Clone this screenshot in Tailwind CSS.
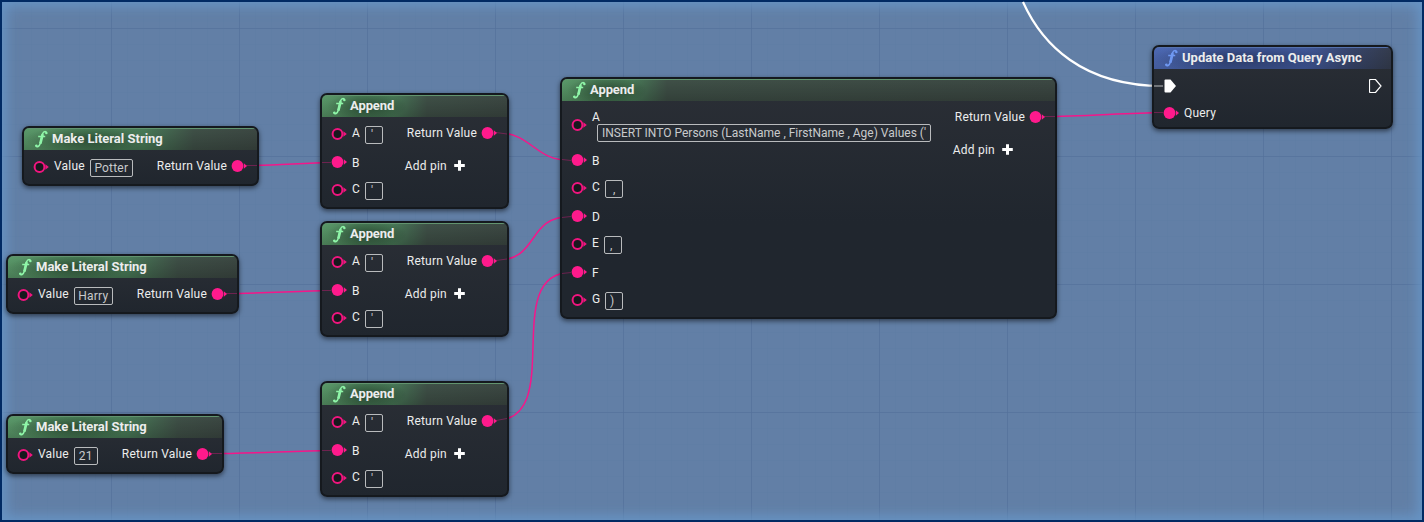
<!DOCTYPE html>
<html lang="en">
<head>
<meta charset="utf-8">
<title>Blueprint graph</title>
<script src="https://cdn.jsdelivr.net/npm/@tailwindcss/browser@4"></script>
</head>
<body>
<svg class="absolute h-0 w-0">
  <defs>
    <symbol id="fn" viewBox="0 0 13 19"><path d="M11.600 3.200C11.600.9 8.800.5 7.700 3.600C6.800 6.400 6.200 10 5.200 13.500C4.400 16.500 1.900 17.700.9 15.900" fill="none" stroke="currentColor" stroke-width="1.500" stroke-linecap="round"/><path d="M7.700 4.200C6.800 7.400 6.200 10.200 5.300 13.600" fill="none" stroke="currentColor" stroke-width="2.700"/><path d="M3.200 6.500h7" stroke="currentColor" stroke-width="1.400"/><circle cx="11.300" cy="3" r="1.200" fill="currentColor"/><circle cx="1.400" cy="15.600" r="1.200" fill="currentColor"/></symbol>
    <symbol id="pin" viewBox="0 0 16 14"><circle cx="6.5" cy="7" r="4.9" fill="#17191d" stroke="#f0157f" stroke-width="2"/><path d="M12.4 4.2 15.8 7l-3.4 2.8z" fill="#f0157f"/></symbol>
    <symbol id="pinOn" viewBox="0 0 16 14"><circle cx="6.5" cy="7" r="5.9" fill="#ff1a8c"/><path d="M12.8 4.2 16 7l-3.2 2.8z" fill="#ff1a8c"/></symbol>
    <symbol id="plus" viewBox="0 0 11 11"><path d="M5.5.2v10.6M.2 5.500h10.600" stroke="#fff" stroke-width="3" fill="none"/></symbol>
  </defs>
</svg>
<main id="canvas" class="relative h-[522px] w-[1424px] overflow-hidden bg-[#627fa6] font-[Roboto,sans-serif] text-[12px] leading-[14px] tracking-[0.2px] text-[#eceded]">
  <!-- grid -->
  <svg class="absolute inset-0" width="1424" height="522">
    <defs>
      <pattern id="minor" x="111" y="28" width="16" height="16" patternUnits="userSpaceOnUse"><path d="M.5 0v16M0 .5h16" stroke="#5c7aa2" stroke-opacity=".35"/></pattern>
      <pattern id="major" x="111" y="28" width="128" height="128" patternUnits="userSpaceOnUse"><path d="M.5 0v128M0 .5h128" stroke="#54709a" stroke-opacity=".6"/></pattern>
    </defs>
    <rect width="1424" height="522" fill="url(#minor)"/>
    <rect width="1424" height="522" fill="url(#major)"/>
  </svg>
  <div class="absolute inset-0 border-2 border-[#012a63] shadow-[inset_0_0_13px_4px_#6795c6]"></div>

  <!-- wires -->
  <svg class="absolute inset-0" width="1424" height="522" fill="none" stroke="#f5168a" stroke-width="1.5">
    <path d="M246 165.500C275 165.500 302 163 331 162.500"/>
    <path d="M226 293.500C261 293.500 296 291 331 290.500"/>
    <path d="M211 453.500C251 453.500 291 451 331 450.500"/>
    <path d="M495 132.500C533 132.500 533 160.500 571 160.500"/>
    <path d="M495 260.500C541 260.500 525 216.500 571 216.500"/>
    <path d="M495 420.500C567 420.500 499 272.500 571 272.500"/>
    <path d="M1043 116.500C1083 116.500 1123 113 1163 112.500"/>
    <path d="M1023 2C1042 44 1082 86 1163 86" stroke="#fff" stroke-width="2.200"/>
  </svg>

  <!-- Make Literal String: Potter -->
  <section class="absolute left-[22px] top-[126px] flex h-[60px] w-[237px] flex-col overflow-hidden rounded-[7px] border-2 border-[#15191e] bg-linear-to-b from-[#2b2f36] to-[#20262e] shadow-[0_2px_5px_#0008]">
    <header class="flex h-[22px] shrink-0 items-center gap-[4px] border-t border-[#62946f] bg-[radial-gradient(ellipse_60px_14px_at_60px_50%,#0005,#0000),linear-gradient(to_bottom,#0000,#0003),linear-gradient(to_right,#5b9a6a,#4a8058_75px,#487a57_120px,#3f5047_170px,#3c4843)] pl-[11px]">
      <svg class="h-[19px] w-[13px] text-[#8ff5a8]"><use href="#fn"/></svg>
      <b class="mb-0.5 text-[13px] font-bold tracking-[0px]">Make Literal String</b>
    </header>
    <div class="flex flex-1 justify-between pl-[9px] pr-[10px]">
      <div class="flex h-[33px] items-center"><svg class="mt-px h-[14px] w-4"><use href="#pin"/></svg><span class="ml-[5px] mb-px">Value</span><span class="ml-[5px] mt-[2px] flex h-[18px] w-[43px] items-center justify-center rounded-[2px] border border-[#b9bbbd] text-[#c8cacc]">Potter</span></div>
      <div class="flex h-[31px] items-center gap-1"><span>Return Value</span><svg class="h-[14px] w-4"><use href="#pinOn"/></svg></div>
    </div>
  </section>

  <!-- Make Literal String: Harry -->
  <section class="absolute left-[6px] top-[254px] flex h-[60px] w-[233px] flex-col overflow-hidden rounded-[7px] border-2 border-[#15191e] bg-linear-to-b from-[#2b2f36] to-[#20262e] shadow-[0_2px_5px_#0008]">
    <header class="flex h-[22px] shrink-0 items-center gap-[4px] border-t border-[#62946f] bg-[radial-gradient(ellipse_60px_14px_at_60px_50%,#0005,#0000),linear-gradient(to_bottom,#0000,#0003),linear-gradient(to_right,#5b9a6a,#4a8058_75px,#487a57_120px,#3f5047_170px,#3c4843)] pl-[11px]">
      <svg class="h-[19px] w-[13px] text-[#8ff5a8]"><use href="#fn"/></svg>
      <b class="mb-0.5 text-[13px] font-bold tracking-[0px]">Make Literal String</b>
    </header>
    <div class="flex flex-1 justify-between pl-[9px] pr-[10px]">
      <div class="flex h-[33px] items-center"><svg class="mt-px h-[14px] w-4"><use href="#pin"/></svg><span class="ml-[5px] mb-px">Value</span><span class="ml-[5px] mt-[2px] flex h-[18px] w-[39px] items-center justify-center rounded-[2px] border border-[#b9bbbd] text-[#c8cacc]">Harry</span></div>
      <div class="flex h-[31px] items-center gap-1"><span>Return Value</span><svg class="h-[14px] w-4"><use href="#pinOn"/></svg></div>
    </div>
  </section>

  <!-- Make Literal String: 21 -->
  <section class="absolute left-[6px] top-[414px] flex h-[60px] w-[218px] flex-col overflow-hidden rounded-[7px] border-2 border-[#15191e] bg-linear-to-b from-[#2b2f36] to-[#20262e] shadow-[0_2px_5px_#0008]">
    <header class="flex h-[22px] shrink-0 items-center gap-[4px] border-t border-[#62946f] bg-[radial-gradient(ellipse_60px_14px_at_60px_50%,#0005,#0000),linear-gradient(to_bottom,#0000,#0003),linear-gradient(to_right,#5b9a6a,#4a8058_75px,#487a57_120px,#3f5047_170px,#3c4843)] pl-[11px]">
      <svg class="h-[19px] w-[13px] text-[#8ff5a8]"><use href="#fn"/></svg>
      <b class="mb-0.5 text-[13px] font-bold tracking-[0px]">Make Literal String</b>
    </header>
    <div class="flex flex-1 justify-between pl-[9px] pr-[10px]">
      <div class="flex h-[33px] items-center"><svg class="mt-px h-[14px] w-4"><use href="#pin"/></svg><span class="ml-[5px] mb-px">Value</span><span class="ml-[5px] mt-[2px] flex h-[18px] w-[24px] items-center justify-center rounded-[2px] border border-[#b9bbbd] text-[#c8cacc]">21</span></div>
      <div class="flex h-[31px] items-center gap-1"><span>Return Value</span><svg class="h-[14px] w-4"><use href="#pinOn"/></svg></div>
    </div>
  </section>

  <!-- Append 1 -->
  <section class="absolute left-[320px] top-[93px] flex h-[116px] w-[189px] flex-col overflow-hidden rounded-[7px] border-2 border-[#15191e] bg-linear-to-b from-[#2b2f36] to-[#20262e] shadow-[0_2px_5px_#0008]">
    <header class="flex h-[22px] shrink-0 items-center gap-[4px] border-t border-[#62946f] bg-[radial-gradient(ellipse_40px_14px_at_45px_50%,#0005,#0000),linear-gradient(to_bottom,#0000,#0003),linear-gradient(to_right,#5b9a6a,#4a8058_35px,#487a57_70px,#3f5047_105px,#3c4843)] pl-[11px]">
      <svg class="h-[19px] w-[13px] text-[#8ff5a8]"><use href="#fn"/></svg>
      <b class="mb-0.5 text-[13px] font-bold tracking-[-0.1px]">Append</b>
    </header>
    <div class="flex flex-1 justify-between pl-[9px] pr-[10px] pt-[3px]">
      <div>
        <div class="flex h-7 items-center"><svg class="h-[14px] w-4"><use href="#pin"/></svg><span class="ml-[5px] mb-[3px] w-[13px]">A</span><span class="mt-px h-[18px] w-[18px] rounded-[2px] border border-[#b9bbbd] pl-[5px] leading-[16px] text-[#c8cacc]">'</span></div>
        <div class="flex h-7 items-center"><svg class="h-[14px] w-4"><use href="#pinOn"/></svg><span class="ml-[5px] mt-px">B</span></div>
        <div class="flex h-7 items-center"><svg class="h-[14px] w-4"><use href="#pin"/></svg><span class="ml-[5px] mb-[3px] w-[13px]">C</span><span class="mt-px h-[18px] w-[18px] rounded-[2px] border border-[#b9bbbd] pl-[5px] leading-[16px] text-[#c8cacc]">'</span></div>
      </div>
      <div>
        <div class="flex h-[25px] items-center gap-1"><span>Return Value</span><svg class="h-[14px] w-4"><use href="#pinOn"/></svg></div>
        <div class="-ml-0.5 mt-2 flex h-[25px] items-center gap-[7px]"><span>Add pin</span><svg class="h-[11px] w-[11px]"><use href="#plus"/></svg></div>
      </div>
    </div>
  </section>

  <!-- Append 2 -->
  <section class="absolute left-[320px] top-[221px] flex h-[116px] w-[189px] flex-col overflow-hidden rounded-[7px] border-2 border-[#15191e] bg-linear-to-b from-[#2b2f36] to-[#20262e] shadow-[0_2px_5px_#0008]">
    <header class="flex h-[22px] shrink-0 items-center gap-[4px] border-t border-[#62946f] bg-[radial-gradient(ellipse_40px_14px_at_45px_50%,#0005,#0000),linear-gradient(to_bottom,#0000,#0003),linear-gradient(to_right,#5b9a6a,#4a8058_35px,#487a57_70px,#3f5047_105px,#3c4843)] pl-[11px]">
      <svg class="h-[19px] w-[13px] text-[#8ff5a8]"><use href="#fn"/></svg>
      <b class="mb-0.5 text-[13px] font-bold tracking-[-0.1px]">Append</b>
    </header>
    <div class="flex flex-1 justify-between pl-[9px] pr-[10px] pt-[3px]">
      <div>
        <div class="flex h-7 items-center"><svg class="h-[14px] w-4"><use href="#pin"/></svg><span class="ml-[5px] mb-[3px] w-[13px]">A</span><span class="mt-px h-[18px] w-[18px] rounded-[2px] border border-[#b9bbbd] pl-[5px] leading-[16px] text-[#c8cacc]">'</span></div>
        <div class="flex h-7 items-center"><svg class="h-[14px] w-4"><use href="#pinOn"/></svg><span class="ml-[5px] mt-px">B</span></div>
        <div class="flex h-7 items-center"><svg class="h-[14px] w-4"><use href="#pin"/></svg><span class="ml-[5px] mb-[3px] w-[13px]">C</span><span class="mt-px h-[18px] w-[18px] rounded-[2px] border border-[#b9bbbd] pl-[5px] leading-[16px] text-[#c8cacc]">'</span></div>
      </div>
      <div>
        <div class="flex h-[25px] items-center gap-1"><span>Return Value</span><svg class="h-[14px] w-4"><use href="#pinOn"/></svg></div>
        <div class="-ml-0.5 mt-2 flex h-[25px] items-center gap-[7px]"><span>Add pin</span><svg class="h-[11px] w-[11px]"><use href="#plus"/></svg></div>
      </div>
    </div>
  </section>

  <!-- Append 3 -->
  <section class="absolute left-[320px] top-[381px] flex h-[116px] w-[189px] flex-col overflow-hidden rounded-[7px] border-2 border-[#15191e] bg-linear-to-b from-[#2b2f36] to-[#20262e] shadow-[0_2px_5px_#0008]">
    <header class="flex h-[22px] shrink-0 items-center gap-[4px] border-t border-[#62946f] bg-[radial-gradient(ellipse_40px_14px_at_45px_50%,#0005,#0000),linear-gradient(to_bottom,#0000,#0003),linear-gradient(to_right,#5b9a6a,#4a8058_35px,#487a57_70px,#3f5047_105px,#3c4843)] pl-[11px]">
      <svg class="h-[19px] w-[13px] text-[#8ff5a8]"><use href="#fn"/></svg>
      <b class="mb-0.5 text-[13px] font-bold tracking-[-0.1px]">Append</b>
    </header>
    <div class="flex flex-1 justify-between pl-[9px] pr-[10px] pt-[3px]">
      <div>
        <div class="flex h-7 items-center"><svg class="h-[14px] w-4"><use href="#pin"/></svg><span class="ml-[5px] mb-[3px] w-[13px]">A</span><span class="mt-px h-[18px] w-[18px] rounded-[2px] border border-[#b9bbbd] pl-[5px] leading-[16px] text-[#c8cacc]">'</span></div>
        <div class="flex h-7 items-center"><svg class="h-[14px] w-4"><use href="#pinOn"/></svg><span class="ml-[5px] mt-px">B</span></div>
        <div class="flex h-7 items-center"><svg class="h-[14px] w-4"><use href="#pin"/></svg><span class="ml-[5px] mb-[3px] w-[13px]">C</span><span class="mt-px h-[18px] w-[18px] rounded-[2px] border border-[#b9bbbd] pl-[5px] leading-[16px] text-[#c8cacc]">'</span></div>
      </div>
      <div>
        <div class="flex h-[25px] items-center gap-1"><span>Return Value</span><svg class="h-[14px] w-4"><use href="#pinOn"/></svg></div>
        <div class="-ml-0.5 mt-2 flex h-[25px] items-center gap-[7px]"><span>Add pin</span><svg class="h-[11px] w-[11px]"><use href="#plus"/></svg></div>
      </div>
    </div>
  </section>

  <!-- Append, seven pins -->
  <section class="absolute left-[560px] top-[77px] flex h-[242px] w-[497px] flex-col overflow-hidden rounded-[7px] border-2 border-[#15191e] bg-linear-to-b from-[#2b2f36] to-[#20262e] to-60% shadow-[0_2px_5px_#0008]">
    <header class="flex h-[22px] shrink-0 items-center gap-[4px] border-t border-[#62946f] bg-[radial-gradient(ellipse_40px_14px_at_45px_50%,#0005,#0000),linear-gradient(to_bottom,#0000,#0003),linear-gradient(to_right,#5b9a6a,#4a8058_35px,#487a57_70px,#3f5047_105px,#3c4843)] pl-[11px]">
      <svg class="h-[19px] w-[13px] text-[#8ff5a8]"><use href="#fn"/></svg>
      <b class="mb-0.5 text-[13px] font-bold tracking-[-0.1px]">Append</b>
    </header>
    <div class="flex flex-1 justify-between pl-[9px] pr-[10px] pt-[3px]">
      <div>
        <div class="flex h-[42px] items-start"><svg class="mt-[14px] h-[14px] w-4"><use href="#pin"/></svg>
          <div class="ml-[5px] mt-[6px]"><div>A</div><div class="ml-[5px] flex h-[18px] w-[334px] items-center justify-center whitespace-nowrap rounded-[2px] border border-[#b9bbbd] tracking-[0px] text-[#c8cacc]">INSERT INTO Persons (LastName , FirstName , Age) Values ('</div></div>
        </div>
        <div class="flex h-7 items-center"><svg class="h-[14px] w-4"><use href="#pinOn"/></svg><span class="ml-[5px] mt-px">B</span></div>
        <div class="flex h-7 items-center"><svg class="h-[14px] w-4"><use href="#pin"/></svg><span class="ml-[5px] mb-[3px] w-[13px]">C</span><span class="mt-px h-[18px] w-[18px] rounded-[2px] border border-[#b9bbbd] pl-[7px] leading-[17px] text-[#c8cacc]">,</span></div>
        <div class="flex h-7 items-center"><svg class="h-[14px] w-4"><use href="#pinOn"/></svg><span class="ml-[5px] mt-px">D</span></div>
        <div class="flex h-7 items-center"><svg class="h-[14px] w-4"><use href="#pin"/></svg><span class="ml-[5px] mb-[3px] w-[12px]">E</span><span class="mt-px h-[18px] w-[18px] rounded-[2px] border border-[#b9bbbd] pl-[5px] leading-[17px] text-[#c8cacc]">,</span></div>
        <div class="flex h-7 items-center"><svg class="h-[14px] w-4"><use href="#pinOn"/></svg><span class="ml-[5px] mt-px">F</span></div>
        <div class="flex h-7 items-center"><svg class="h-[14px] w-4"><use href="#pin"/></svg><span class="ml-[5px] mb-[3px] w-[13px]">G</span><span class="mt-px h-[18px] w-[18px] rounded-[2px] border border-[#b9bbbd] pl-[4px] leading-[16px] text-[#c8cacc]">)</span></div>
      </div>
      <div>
        <div class="flex h-[25px] items-center gap-1"><span>Return Value</span><svg class="h-[14px] w-4"><use href="#pinOn"/></svg></div>
        <div class="-ml-0.5 mt-2 flex h-[25px] items-center gap-[7px]"><span>Add pin</span><svg class="h-[11px] w-[11px]"><use href="#plus"/></svg></div>
      </div>
    </div>
  </section>

  <!-- Update Data from Query Async -->
  <section class="absolute left-[1152px] top-[45px] flex h-[84px] w-[241px] flex-col overflow-hidden rounded-[7px] border-2 border-[#15191e] bg-linear-to-b from-[#2b2f36] to-[#20262e] shadow-[0_2px_5px_#0008]">
    <header class="flex h-[22px] shrink-0 items-center gap-[4px] border-t border-[#5572ae] bg-[radial-gradient(ellipse_90px_14px_at_85px_50%,#0004,#0000),linear-gradient(to_bottom,#0000,#0002),linear-gradient(to_right,#4d69b4,#40589a_70px,#40589a_150px,#374468_200px,#343c4e)] pl-[11px]">
      <svg class="h-[19px] w-[13px] text-[#6f98f2]"><use href="#fn"/></svg>
      <b class="mb-0.5 text-[13px] font-bold tracking-[0px]">Update Data from Query Async</b>
    </header>
    <div class="flex flex-1 justify-between pl-[9px] pr-[9px] pt-[3px]">
      <div>
        <div class="flex h-7 items-center pl-px"><svg class="h-[14px] w-[13px]" viewBox="0 0 13 14"><path d="M1.500.5H6.500L12 7 6.500 13.500H1.500Q.5 13.500.5 12.500V1.500Q.5.5 1.500.5Z" fill="#fff"/></svg></div>
        <div class="flex h-[25px] items-center"><svg class="h-[14px] w-4"><use href="#pinOn"/></svg><span class="ml-[5px]">Query</span></div>
      </div>
      <div class="flex h-7 items-center"><svg class="h-[14px] w-[13px]" viewBox="0 0 13 14"><path d="M1.500.5H6.500L12 7 6.500 13.500H1.500Q.5 13.500.5 12.500V1.500Q.5.5 1.500.5Z" fill="none" stroke="#fff" stroke-width="1.200"/></svg></div>
    </div>
  </section>

  <!-- faded wire ends inside the nodes -->
  <svg class="absolute inset-0" width="1424" height="522" fill="none" stroke="#f5168a" stroke-opacity=".35">
    <path d="M246 165.500h11M226 293.500h11M211 453.500h11M322 162.500h9M322 290.500h9M322 450.500h9M496 132.500l11 1.500M496 260.500l11-1.500M496 420.500l11-2M562 159.500l9 1M562 217.500l9-1M562 273.500l9-1M1044 116.500h11M1154 112.500h9"/>
    <path d="M1154 86h9" stroke="#fff" stroke-width="2"/>
  </svg>
</main>
</body>
</html>
